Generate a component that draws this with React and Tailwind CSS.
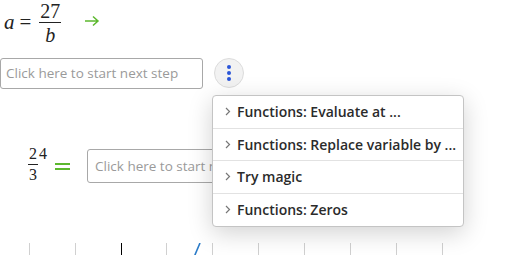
import React from "react";

const menuItems = [
  "Functions: Evaluate at ...",
  "Functions: Replace variable by ...",
  "Try magic",
  "Functions: Zeros",
];

const ticks = [
  { x: 29, c: "bg-[#d0d0d0]" },
  { x: 75, c: "bg-[#d0d0d0]" },
  { x: 121, c: "bg-black" },
  { x: 166, c: "bg-[#d0d0d0]" },
  { x: 212, c: "bg-[#d0d0d0]" },
  { x: 258, c: "bg-[#d0d0d0]" },
  { x: 304, c: "bg-[#d0d0d0]" },
  { x: 350, c: "bg-[#d0d0d0]" },
  { x: 396, c: "bg-[#d0d0d0]" },
  { x: 442, c: "bg-[#d0d0d0]" },
];

const Chevron = () => (
  <svg width="6" height="9" viewBox="0 0 6 9" className="shrink-0">
    <path d="M1 1l3.5 3.5L1 8" fill="none" stroke="#777" strokeWidth="1.2" />
  </svg>
);

const App = () => {
  return (
    <div className="relative w-[513px] h-[255px] overflow-hidden bg-white font-['Open_Sans',sans-serif]">
      {/* first expression */}
      <div className="flex items-center h-[46px] pl-[4px] font-['Liberation_Serif',serif] text-[21px] text-[#222]">
        <span className="italic">a</span>
        <span className="ml-[5px]">=</span>
        <span className="ml-[8px] flex flex-col items-center text-[20px] leading-[16px]">
          <span className="px-[1px]">27</span>
          <span className="w-full h-[1px] bg-[#222] mt-[3px] mb-[4px]" />
          <span className="italic">b</span>
        </span>
        <svg width="16" height="12" viewBox="0 0 16 12" className="ml-[23px] -mt-[4px]">
          <path d="M1 6h13M9 1.5L14 6l-5 4.5" fill="none" stroke="#5cb82e" strokeWidth="1.5" />
        </svg>
      </div>

      {/* next step input */}
      <div className="flex items-center mt-[11px] h-[32px]">
        <div className="w-[203px] h-[31px] border border-[#a8a8a8] rounded-[3px] flex items-center pl-[5px] text-[13.5px] text-[#9a9a9a] whitespace-nowrap overflow-hidden">
          Click here to start next step
        </div>
        <div className="ml-[11px] w-[30px] h-[30px] rounded-full bg-[#f2f2f2] border border-[#dcdcdc] flex flex-col items-center justify-center gap-[2px]">
          <span className="w-[4px] h-[4px] rounded-full bg-[#2a55d8]" />
          <span className="w-[4px] h-[4px] rounded-full bg-[#2a55d8]" />
          <span className="w-[4px] h-[4px] rounded-full bg-[#2a55d8]" />
        </div>
      </div>

      {/* second expression */}
      <div className="flex items-center mt-[60px] h-[34px]">
        <div className="ml-[28px] -mt-[4px] flex items-start font-['Liberation_Serif',serif] text-[16px] text-[#222] leading-none">
          <span className="flex flex-col items-center">
            <span>2</span>
            <span className="w-[10px] h-[1px] bg-[#222] my-[2px]" />
            <span>3</span>
          </span>
          <span className="ml-[1px]">4</span>
        </div>
        <div className="ml-[8px] flex flex-col gap-[3px] w-[15px]">
          <span className="h-[2px] bg-[#5cb82e]" />
          <span className="h-[2px] bg-[#5cb82e]" />
        </div>
        <div className="ml-[17px] w-[210px] h-[34px] border border-[#a8a8a8] rounded-[3px] flex items-center pl-[7px] text-[13.5px] text-[#9a9a9a] whitespace-nowrap overflow-hidden">
          Click here to start next step
        </div>
      </div>

      {/* ruler ticks */}
      <div className="relative mt-[60px] h-[13px]">
        {ticks.map((t) => (
          <span
            key={t.x}
            className={`absolute top-0 w-[1px] h-[13px] ${t.c}`}
            style={{ left: t.x }}
          />
        ))}
        <svg width="8" height="13" viewBox="0 0 8 13" className="absolute left-[193px] top-0">
          <path d="M7 0L1.5 13" stroke="#2a7bc8" strokeWidth="1.6" />
        </svg>
      </div>

      {/* dropdown menu */}
      <div className="absolute left-[212px] top-[95px] w-[252px] bg-white border border-[#c4c4c4] rounded-[4px] shadow-[0_6px_24px_rgba(0,0,0,0.18)]">
        {menuItems.map((item, i) => (
          <div
            key={item}
            className={`flex items-center gap-[6px] h-[32.5px] pl-[12px] text-[14px] font-semibold text-[#2b2b2b] whitespace-nowrap ${
              i < menuItems.length - 1 ? "border-b border-[#e2e2e2]" : ""
            }`}
          >
            <Chevron />
            <span>{item}</span>
          </div>
        ))}
      </div>
    </div>
  );
};

export default App;
